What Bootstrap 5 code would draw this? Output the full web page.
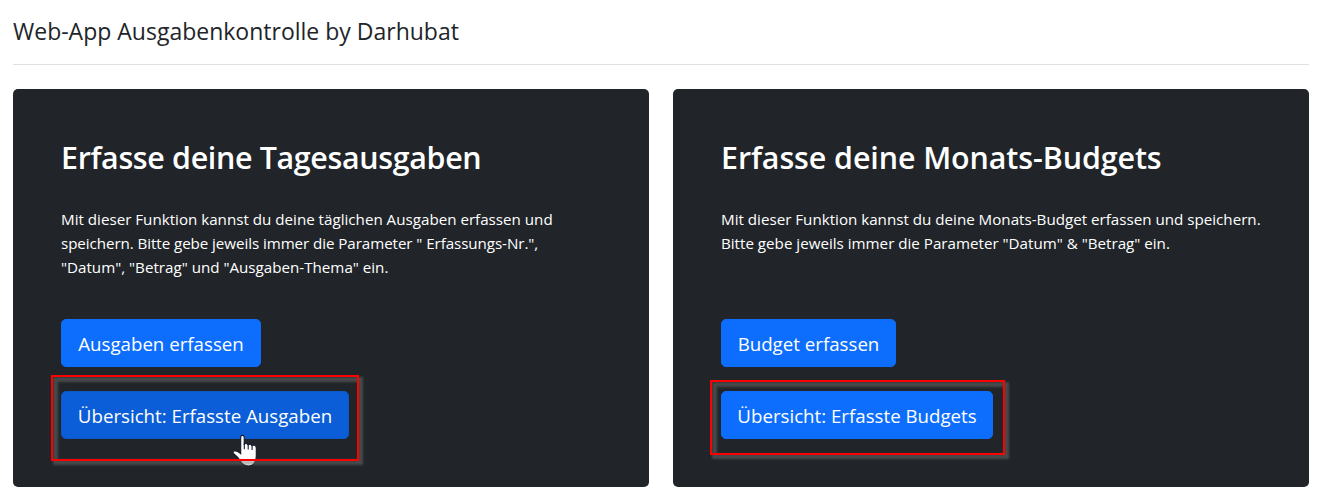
<!DOCTYPE html>
<html lang="de">
<head>
<meta charset="utf-8">
<title>Web-App Ausgabenkontrolle</title>
<link href="https://cdn.jsdelivr.net/npm/bootstrap@5.3.0/dist/css/bootstrap.min.css" rel="stylesheet">
<style>
body{font-family:"Open Sans","Noto Sans",sans-serif;overflow:hidden}
.page{padding:0 18px 0 13px}
.page-head{height:65px;border-color:#dee2e6!important}
.page-title{font-size:23px;line-height:31px}
.panel{background:#212529;border-radius:5px;height:398px}
.panel h2{font-size:30.4px;line-height:38px;font-weight:600;padding-top:2px;margin-bottom:30px}
.h-day{letter-spacing:-.33px}
.h-month{letter-spacing:-.08px}
.panel p{font-size:15.16px;line-height:24px;height:72px;margin-bottom:40px}
.tight{letter-spacing:-.07px}
.btn-lg{--bs-btn-border-radius:5px;height:48px;padding:9px 0 7px;font-size:18.7px;line-height:30px}
.w1{width:200px}
.w2{width:288px}
.w3{width:175px}
.w4{width:272px}
.btn-over{background:#0b5ed7;border-color:#0a58ca}
.marker{z-index:3;pointer-events:none}
.marker::before{content:"";position:absolute;inset:2px -4px -4px 2px;border:5px solid rgba(110,110,108,.5);filter:blur(.8px)}
.marker::after{content:"";position:absolute;inset:0;border:2px solid #f00}
.m1{left:-10px;top:-16px;width:308px;height:86px}
.m2{left:-11px;top:-11px;width:295px;height:75px}
.hand{left:171px;top:42px;z-index:2}
</style>
</head>
<body>
<div class="page">
<header class="page-head border-bottom mb-4 pt-3"><div class="page-title text-nowrap">Web-App Ausgabenkontrolle by Darhubat</div></header>
<div class="row">
<div class="col-6"><section class="panel p-5 text-white text-nowrap">
<h2 class="h-day">Erfasse deine Tagesausgaben</h2>
<p>Mit dieser Funktion kannst du deine täglichen Ausgaben erfassen und<br><span class="tight">speichern. Bitte gebe jeweils immer die Parameter " Erfassungs-Nr.",</span><br>"Datum", "Betrag" und "Ausgaben-Thema" ein.</p>
<button class="btn btn-primary btn-lg w1 d-block mb-4">Ausgaben erfassen</button>
<div class="position-relative"><button class="btn btn-primary btn-lg btn-over w2">Übersicht: Erfasste Ausgaben</button>
<svg class="hand position-absolute" width="28" height="34" viewBox="0 0 28 34"><path d="M8.7 4.2C8.7 1.8 12.2 1.8 12.2 4.2V11.2Q14.3 9.5 16 11.8Q18.4 10.2 19.8 12.5Q23.8 11 24.3 15V23Q24.3 32.5 16.5 33Q11 32.8 8.7 28.6Q6 24 2 21Q-.5 17.7 3.3 17.6Q6 18 8.7 20.7Z" fill="#fff" stroke="#14182b" stroke-width="1.1"/><path d="M12.3 10.5V16.2M16.2 11.8V16.5M20.1 12.8V17" stroke="#14182b" stroke-width="1.1" fill="none"/></svg>
<div class="marker m1 position-absolute"></div></div>
</section></div>
<div class="col-6"><section class="panel p-5 text-white text-nowrap">
<h2 class="h-month">Erfasse deine Monats-Budgets</h2>
<p>Mit dieser Funktion kannst du deine Monats-Budget erfassen und speichern.<br>Bitte gebe jeweils immer die Parameter "Datum" &amp; "Betrag" ein.</p>
<button class="btn btn-primary btn-lg w3 d-block mb-4">Budget erfassen</button>
<div class="position-relative"><button class="btn btn-primary btn-lg w4">Übersicht: Erfasste Budgets</button>
<div class="marker m2 position-absolute"></div></div>
</section></div>
</div>
</div>
<script src="https://cdn.jsdelivr.net/npm/bootstrap@5.3.0/dist/js/bootstrap.bundle.min.js"></script>
</body>
</html>
